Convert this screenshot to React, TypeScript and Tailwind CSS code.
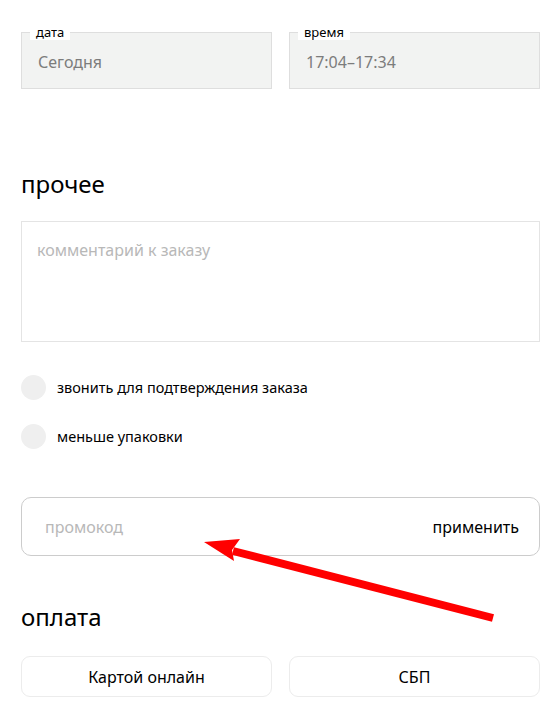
const font = { fontFamily: '"Noto Sans", "Liberation Sans", sans-serif' };

function Field({ label, value }: { label: string; value: string }) {
  return (
    <div className="relative h-[57px] flex-1 border border-[#dedede] bg-[#f2f3f2]">
      <span className="absolute left-[8px] top-[-8px] bg-white px-[6px] text-[13px] leading-[15px] text-black">
        {label}
      </span>
      <div className="flex h-full items-center pl-[16px] pt-[2px] text-[16px] text-[#7c7c7c]">{value}</div>
    </div>
  );
}

function Check({ label }: { label: string }) {
  return (
    <div className="flex items-center gap-[11px]">
      <span className="h-[25px] w-[25px] rounded-full bg-[#efefef]" />
      <span className="text-[14.5px] text-black">{label}</span>
    </div>
  );
}

export default function App() {
  return (
    <div className="relative h-[719px] w-[557px] overflow-hidden bg-white" style={font}>
      <div className="flex flex-col pl-[21px] pr-[17px] pt-[32px]">
        {/* Date / time */}
        <div className="flex gap-[17px]">
          <Field label="дата" value="Сегодня" />
          <Field label="время" value="17:04–17:34" />
        </div>

        {/* Other */}
        <h2 className="mt-[80px] text-[24px] leading-[30px] text-black">прочее</h2>
        <div className="mt-[22px] h-[121px] border border-[#e4e4e4] px-[15px] py-[16px] text-[16px] text-[#b8b8b8]">
          комментарий к заказу
        </div>

        <div className="mt-[33px] flex flex-col gap-[24px]">
          <Check label="звонить для подтверждения заказа" />
          <Check label="меньше упаковки" />
        </div>

        {/* Promo */}
        <div className="mt-[48px] flex h-[59px] items-center justify-between rounded-[10px] border border-[#cccccc] pl-[23px] pr-[20px]">
          <span className="text-[16px] text-[#b8b8b8]">промокод</span>
          <span className="text-[16px] text-black">применить</span>
        </div>

        {/* Payment */}
        <h2 className="mt-[46px] text-[24px] leading-[30px] text-black">оплата</h2>
        <div className="mt-[24px] flex gap-[17px]">
          <button className="h-[41px] flex-1 rounded-[9px] border border-[#ececec] text-[16px] text-black">
            Картой онлайн
          </button>
          <button className="h-[41px] flex-1 rounded-[9px] border border-[#ececec] text-[16px] text-black">
            СБП
          </button>
        </div>
      </div>

      {/* Annotation arrow */}
      <svg className="pointer-events-none absolute left-0 top-0" width="557" height="719" viewBox="0 0 557 719">
        <line x1="233" y1="551" x2="493" y2="618" stroke="#ff0000" strokeWidth="8" />
        <polygon points="204,542 240,539 232,550 234,561" fill="#ff0000" />
      </svg>
    </div>
  );
}
